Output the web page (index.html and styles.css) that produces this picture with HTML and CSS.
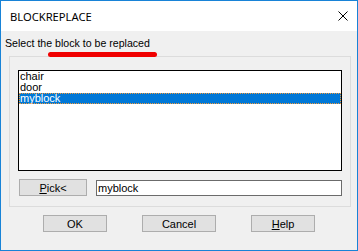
FILE: index.html
```html
<!DOCTYPE html>
<html lang="en">
<head>
    <meta charset="UTF-8">
    <title>BLOCKREPLACE</title>
    <link rel="stylesheet" href="styles.css">
</head>
<body>
    <div class="dialog">
        <div class="title-bar">
            <span class="title">BLOCKREPLACE</span>
            <button class="close-btn" aria-label="Close">
                <svg width="10" height="10" viewBox="0 0 10 10">
                    <path d="M0.5 0.5 L9.5 9.5 M9.5 0.5 L0.5 9.5" stroke="#000" stroke-width="1" fill="none"/>
                </svg>
            </button>
        </div>

        <div class="dialog-body">
            <div class="prompt">
                Select the block to be replaced
                <span class="prompt-mark"></span>
            </div>

            <div class="group">
                <ul class="block-list">
                    <li>chair</li>
                    <li>door</li>
                    <li class="selected">myblock</li>
                </ul>
                <div class="pick-row">
                    <button class="btn pick-btn"><u>P</u>ick&lt;</button>
                    <input class="name-input" type="text" value="myblock">
                </div>
            </div>

            <div class="button-group">
                <button class="btn ok-btn">OK</button>
                <button class="btn cancel-btn">Cancel</button>
                <button class="btn help-btn"><u>H</u>elp</button>
            </div>
        </div>
    </div>
</body>
</html>
```

FILE: styles.css
```css
body {
    margin: 0;
    font-family: "Liberation Sans", Arial, sans-serif;
    font-size: 11px;
}

.dialog {
    width: 358px;
    height: 251px;
    box-sizing: border-box;
    border: 1px solid #1883d7;
    background-color: #f0f0f0;
    display: flex;
    flex-direction: column;
}

.title-bar {
    height: 30px;
    background-color: #fff;
    display: flex;
    align-items: center;
}

.title {
    padding-left: 9px;
    font-family: "Noto Sans", sans-serif;
    font-size: 11.2px;
    color: #000;
}

.close-btn {
    margin-left: auto;
    margin-right: 9px;
    width: 10px;
    height: 10px;
    padding: 0;
    border: none;
    background: none;
    display: flex;
}

.dialog-body {
    flex: 1;
    padding: 6px 6px 0 4px;
}

.prompt {
    position: relative;
    height: 13px;
    line-height: 13px;
    font-size: 10.6px;
    color: #000;
}

/* red annotation stroke under the prompt */
.prompt-mark {
    position: absolute;
    left: 43px;
    top: 15px;
    width: 109px;
    height: 5px;
    border-radius: 3px;
    background-color: #f00000;
    z-index: 1;
}

.group {
    margin: 6px 0 0 4px;
    border: 1px solid #dcdcdc;
    padding: 13px 8px 10px 8px;
}

.block-list {
    list-style: none;
    margin: 0;
    padding: 0;
    height: 101px;
    box-sizing: border-box;
    border: 1px solid #000;
    background-color: #fff;
}

.block-list li {
    height: 11px;
    line-height: 11px;
    padding-left: 1px;
    color: #000;
}

.block-list li.selected {
    background-color: #0078d7;
    color: #fff;
    outline: 1px dotted #f29a3a;
    outline-offset: -1px;
}

.pick-row {
    display: flex;
    align-items: flex-start;
    margin-top: 8px;
}

.btn {
    height: 17px;
    padding: 0;
    border: 1px solid #adadad;
    background-color: #e1e1e1;
    font-family: "Liberation Sans", Arial, sans-serif;
    font-size: 11px;
    color: #000;
    box-sizing: border-box;
}

.pick-btn {
    width: 68px;
    margin-left: 1px;
}

.name-input {
    flex: 1;
    min-width: 0;
    height: 16px;
    margin: 1px 0 0 9px;
    padding: 0 0 0 1px;
    box-sizing: border-box;
    border: 1px solid #6b6b6b;
    font-family: "Liberation Sans", Arial, sans-serif;
    font-size: 11px;
    color: #000;
    outline: none;
}

.button-group {
    display: flex;
    margin-top: 8px;
}

.ok-btn {
    width: 64px;
    margin-left: 38px;
}

.cancel-btn {
    width: 74px;
    margin-left: 35px;
}

.help-btn {
    width: 64px;
    margin-left: 35px;
}
```
